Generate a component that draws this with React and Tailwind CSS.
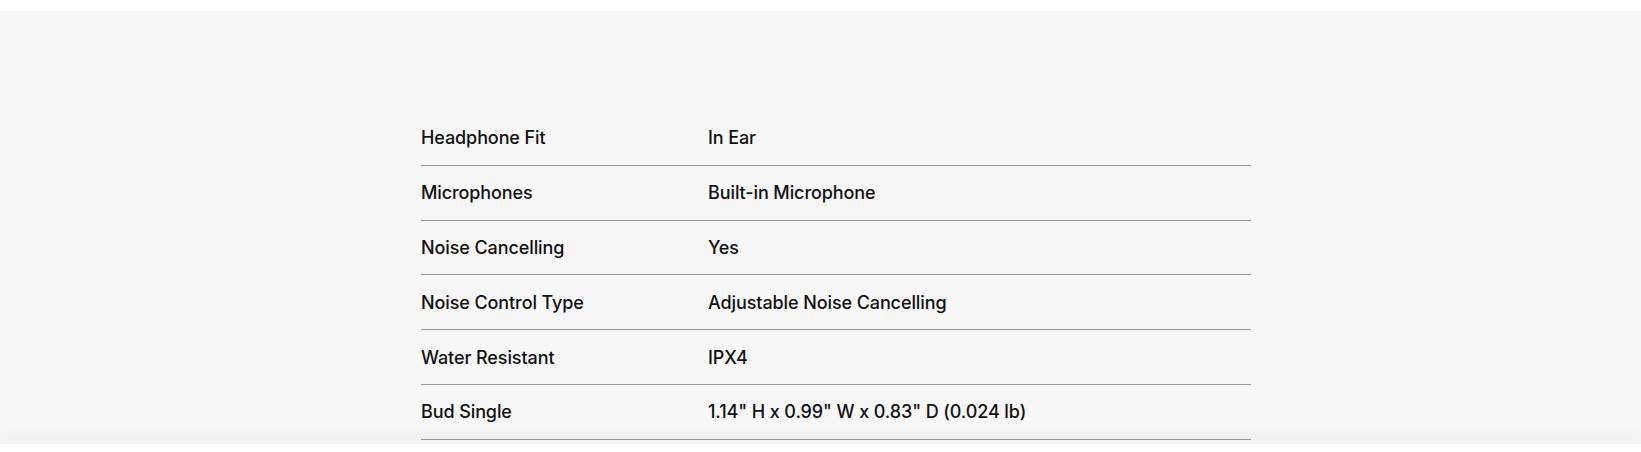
const specs = [
  { label: "Headphone Fit", value: "In Ear" },
  { label: "Microphones", value: "Built-in Microphone" },
  { label: "Noise Cancelling", value: "Yes" },
  { label: "Noise Control Type", value: "Adjustable Noise Cancelling" },
  { label: "Water Resistant", value: "IPX4" },
  { label: "Bud Single", value: '1.14" H x 0.99" W x 0.83" D (0.024 lb)' },
];

const SpecRow = ({ label, value }) => (
  <div className="flex items-center h-[54.8px] border-b border-[#999999]">
    <div className="w-[287px] shrink-0">{label}</div>
    <div>{value}</div>
  </div>
);

const App = () => {
  return (
    <div className="min-h-screen bg-white font-['Inter',sans-serif] font-medium text-[18px] tracking-[-0.1px] text-[#111111]">
      <div className="h-[11px] bg-white"></div>
      <section className="bg-[#f7f7f7] pt-[100px] pb-[20px]">
        <div className="ml-[421px] w-[830px]">
          {specs.map((s) => (
            <SpecRow key={s.label} label={s.label} value={s.value} />
          ))}
        </div>
      </section>
      <div className="fixed bottom-0 left-0 right-0 h-[8px] bg-white shadow-[0_-6px_18px_rgba(0,0,0,0.06)]"></div>
    </div>
  );
};

export default App;
